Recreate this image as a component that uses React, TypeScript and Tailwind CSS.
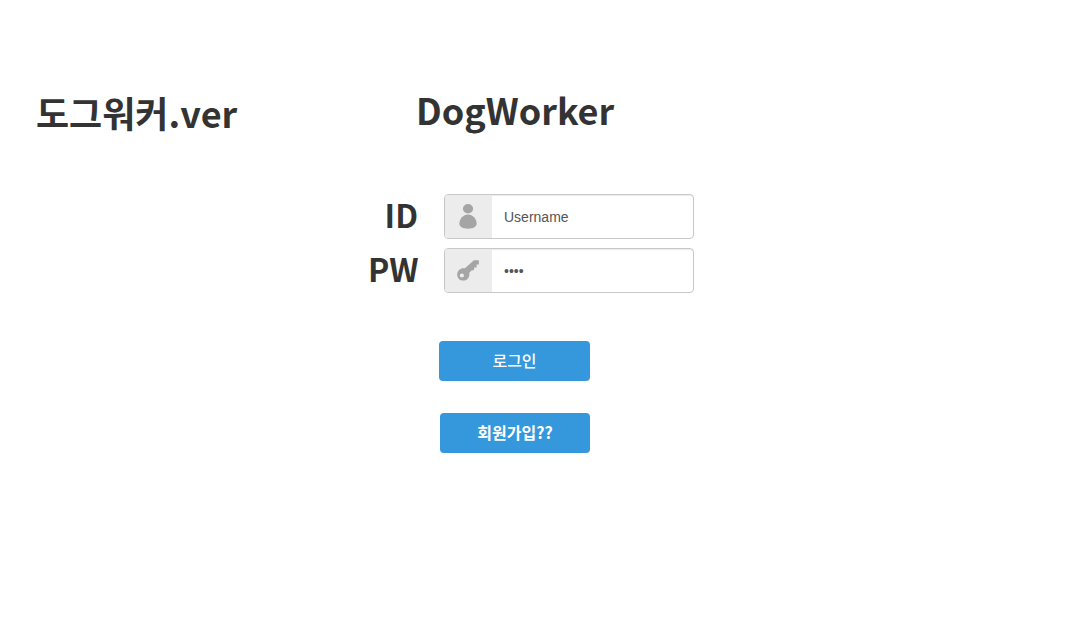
import { useState } from "react";
import type { ReactNode } from "react";

function UserIcon() {
  return (
    <svg viewBox="0 0 18 25" className="h-[25px] w-[18px]" fill="#a5a5a5" aria-hidden="true">
      <ellipse cx="9" cy="4.8" rx="5.1" ry="4.7" />
      <path d="M9 10.6c4.800 0 8.600 4.600 8.600 9 0 3.400-3.200 5.100-8.600 5.100S.4 23 .4 19.600C.4 15.200 4.200 10.600 9 10.600z" />
    </svg>
  );
}

function KeyIcon() {
  return (
    <svg viewBox="0 0 22 21" className="h-[21px] w-[22px]" fill="#a5a5a5" aria-hidden="true">
      <path
        fillRule="evenodd"
        d="M17.600.2h3.700c.4 0 .6.3.6.6v3.200c0 .4-.3.600-.600.600h-1.700v2.300c0 .4-.3.600-.600.600h-1.900v2.100c0 .4-.3.600-.6.600h-1.700l-2.500 2.600c.7 4-1.800 7.800-5.900 7.800-3.500 0-6.200-2.700-6.200-6.200C.2 10.300 4 7.500 8 8.300L16.600.6c.3-.3.6-.4 1-.4zM4.900 13.400a2.100 2.100 0 1 0 0 4.200 2.100 2.100 0 0 0 0-4.200z"
      />
    </svg>
  );
}

type FieldProps = {
  id: string;
  label: string;
  type: string;
  icon: ReactNode;
  placeholder: string;
  value: string;
  onChange: (value: string) => void;
};

function Field({ id, label, type, icon, placeholder, value, onChange }: FieldProps) {
  return (
    <div className="flex items-start gap-[26px]">
      <label htmlFor={id} className="w-[50px] text-right text-[32px] leading-10 font-bold">
        {label}
      </label>
      <div className="flex h-[45px] w-[250px] overflow-hidden rounded-[4px] border border-[#c8c8c8] bg-white shadow-[inset_0_1px_1px_rgba(0,0,0,0.08)]">
        <span className="flex w-[47px] shrink-0 items-center justify-center bg-[#ececec] pr-0.5">{icon}</span>
        <input
          id={id}
          type={type}
          value={value}
          placeholder={placeholder}
          onChange={(event) => onChange(event.target.value)}
          className="min-w-0 flex-1 bg-transparent px-3 font-['Liberation_Sans',sans-serif] text-sm text-[#555] outline-none placeholder:text-[#555]"
        />
      </div>
    </div>
  );
}

export default function App() {
  const [username, setUsername] = useState("");
  const [password, setPassword] = useState("");

  return (
    <div className="flex min-h-screen items-start bg-white px-9 pt-20 font-['Noto_Sans_CJK_KR',sans-serif] text-[#333]">
      <h2 className="w-[332px] shrink-0 pt-2 text-4xl leading-[48px] font-bold">도그워커.ver</h2>
      <main className="flex flex-col items-start">
        <h1 className="ml-12 text-4xl leading-[58px] font-bold">DogWorker</h1>
        <form onSubmit={(event) => event.preventDefault()} className="mt-14 flex flex-col">
          <div className="flex flex-col gap-[9px]">
            <Field
              id="username"
              label="ID"
              type="text"
              icon={<UserIcon />}
              placeholder="Username"
              value={username}
              onChange={setUsername}
            />
            <Field
              id="password"
              label="PW"
              type="password"
              icon={<KeyIcon />}
              placeholder="••••"
              value={password}
              onChange={setPassword}
            />
          </div>
          <div className="mt-12 ml-[71px] flex w-[151px] flex-col items-end gap-8">
            <button type="submit" className="h-10 w-[151px] rounded-[4px] bg-[#3598dc] pb-0.5 text-base font-medium text-white">
              로그인
            </button>
            <button type="button" className="h-10 w-[150px] rounded-[4px] bg-[#3598dc] pb-0.5 text-base font-bold text-white">
              회원가입??
            </button>
          </div>
        </form>
      </main>
    </div>
  );
}
